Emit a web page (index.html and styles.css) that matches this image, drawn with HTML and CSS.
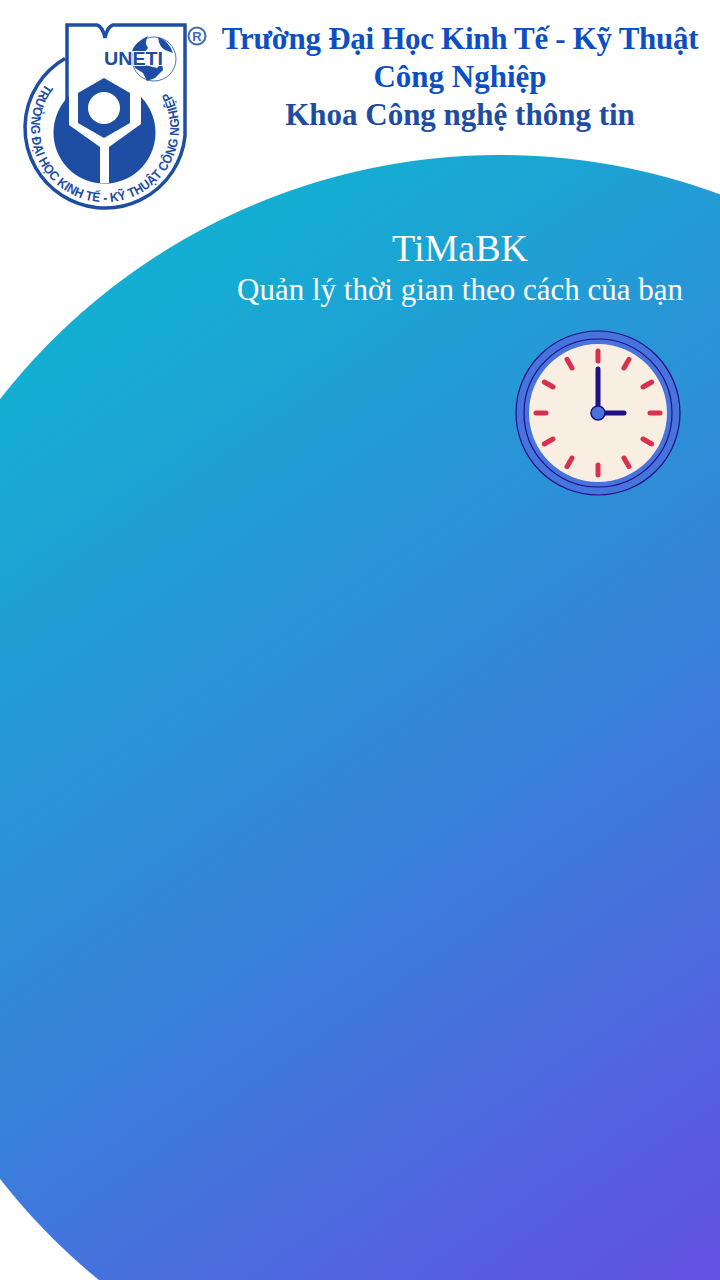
FILE: index.html
```html
<!DOCTYPE html>
<html lang="vi">
<head>
    <meta charset="UTF-8">
    <meta name="viewport" content="width=device-width, initial-scale=1.0">
    <title>TiMaBK</title>
    <link rel="stylesheet" href="styles.css">
</head>
<body>
    <div class="screen">
        <header class="school">
            <svg class="logo" viewBox="0 0 216 216" width="216" height="216" aria-label="UNETI">
                <!-- ring and book shaped shield -->
                <path class="logo-line" d="M65 58.500 A80.200 80.200 0 1 0 185 136 V25 H113 Q107 27 105 38 Q103 27 97 25 H67 V100"/>
                <path class="logo-fill" d="M69 96 A51 51 0 1 0 141 97 V124 L109 147 V183 H100 V147 L69 125 Z"/>
                <polygon class="logo-fill" points="104,78 130,93 130,123 104,138 78,123 78,93"/>
                <circle class="logo-hole" cx="104" cy="108" r="16"/>
                <!-- globe -->
                <circle class="logo-globe" cx="154" cy="59" r="22"/>
                <path class="logo-fill" d="M132 51 Q135 42 148 36 Q144 43 148 48 L145 52 Z"/>
                <path class="logo-fill" d="M158 37 Q169 41 173 53 L165 50 Q159 47 158 37 Z"/>
                <path class="logo-fill" d="M133 63 L145 65 L157 68 L162 63 L163 70 L155 78 L147 81 L143 73 L135 68 Z"/>
                <text class="logo-name" x="104" y="65" textLength="59" lengthAdjust="spacingAndGlyphs">UNETI</text>
                <!-- school name along the ring -->
                <path id="ring" class="logo-guide" d="M46 83.500 A74 74 0 1 0 169 91"/>
                <text class="logo-ring">
                    <textPath href="#ring" textLength="318" lengthAdjust="spacingAndGlyphs">TRƯỜNG ĐẠI HỌC KINH TẾ - KỸ THUẬT CÔNG NGHIỆP</textPath>
                </text>
                <circle class="logo-mark" cx="197" cy="36" r="8.500"/>
                <text class="logo-mark-r" x="197" y="40.500">R</text>
            </svg>
            <div class="school-name">
                <h1><span class="school-line">Trường Đại Học Kinh Tế - Kỹ Thuật</span><br>Công Nghiệp</h1>
                <h2>Khoa Công nghệ thông tin</h2>
            </div>
        </header>

        <section class="app-intro">
            <h3>TiMaBK</h3>
            <p>Quản lý thời gian theo cách của bạn</p>
        </section>

        <div class="clock-row">
            <svg class="clock" viewBox="0 0 168 168" width="168" height="168">
                <circle class="clock-rim" cx="84" cy="84" r="82"/>
                <circle class="clock-inner" cx="84" cy="84" r="74"/>
                <circle class="clock-face" cx="84" cy="84" r="69"/>
                <g class="clock-ticks">
                    <path d="M84 22 V32"/>
                    <path d="M84 22 V32" transform="rotate(30 84 84)"/>
                    <path d="M84 22 V32" transform="rotate(60 84 84)"/>
                    <path d="M84 22 V32" transform="rotate(90 84 84)"/>
                    <path d="M84 22 V32" transform="rotate(120 84 84)"/>
                    <path d="M84 22 V32" transform="rotate(150 84 84)"/>
                    <path d="M84 22 V32" transform="rotate(180 84 84)"/>
                    <path d="M84 22 V32" transform="rotate(210 84 84)"/>
                    <path d="M84 22 V32" transform="rotate(240 84 84)"/>
                    <path d="M84 22 V32" transform="rotate(270 84 84)"/>
                    <path d="M84 22 V32" transform="rotate(300 84 84)"/>
                    <path d="M84 22 V32" transform="rotate(330 84 84)"/>
                </g>
                <path class="clock-hands" d="M84 40 V84 H110"/>
                <circle class="clock-pin" cx="84" cy="84" r="7"/>
            </svg>
        </div>
    </div>
</body>
</html>
```

FILE: styles.css
```css
body {
    margin: 0;
    font-family: "Liberation Serif", serif;
}
.screen {
    box-sizing: border-box;
    width: 720px;
    height: 1280px;
    overflow: hidden;
    background:
        radial-gradient(circle 634px at 500px 789px, transparent 633.5px, #fff 634.5px),
        linear-gradient(145deg, #14aed2 22%, #3a7fda 65%, #6350e3 100%);
}
.school {
    display: flex;
    height: 216px;
    padding-right: 16px;
}
.logo {
    flex: none;
}
.logo-line {
    fill: none;
    stroke: #1e4ea3;
    stroke-width: 3.5;
}
.logo-fill {
    fill: #1e4ea3;
}
.logo-hole {
    fill: #fff;
}
.logo-globe {
    fill: none;
    stroke: #1e4ea3;
    stroke-width: 0.8;
}
.logo-guide {
    fill: none;
}
.logo-name {
    font-family: "Liberation Sans", sans-serif;
    font-weight: bold;
    font-size: 19px;
    fill: #1e4ea3;
    stroke: #fff;
    stroke-width: 2px;
    paint-order: stroke;
}
.logo-ring {
    font-family: "Liberation Sans", sans-serif;
    font-size: 13px;
    font-weight: bold;
    fill: #1e4ea3;
}
.logo-mark {
    fill: none;
    stroke: #3f6cb4;
    stroke-width: 2;
}
.logo-mark-r {
    font-family: "Liberation Sans", sans-serif;
    font-size: 13px;
    font-weight: bold;
    text-anchor: middle;
    fill: #3f6cb4;
}
.school-name {
    flex: 1;
    padding-top: 20px;
    text-align: center;
}
.school-name h1,
.school-name h2 {
    margin: 0;
    font-size: 31px;
    font-weight: bold;
    line-height: 38px;
}
.school-name h1 {
    color: #0c4fc4;
}
.school-name h2 {
    color: #1c4da2;
}
.school-line {
    letter-spacing: -0.3px;
}
.app-intro {
    padding-right: 16px;
    padding-left: 216px;
    color: #fff;
    text-align: center;
}
.app-intro h3 {
    margin: 9px 0 0;
    font-size: 38px;
    font-weight: normal;
    line-height: 46px;
}
.app-intro p {
    margin: 0;
    font-size: 31px;
    line-height: 38px;
}
.clock-row {
    display: flex;
    justify-content: flex-end;
    padding-top: 20px;
    padding-right: 38px;
}
.clock {
    display: block;
}
.clock-rim {
    fill: #4673dc;
    stroke: #1f0f85;
    stroke-width: 1.200;
}
.clock-inner {
    fill: none;
    stroke: #1f0f85;
    stroke-width: 1.200;
}
.clock-face {
    fill: #f9eee2;
}
.clock-ticks path {
    fill: none;
    stroke: #d9304f;
    stroke-width: 5;
    stroke-linecap: round;
}
.clock-hands {
    fill: none;
    stroke: #1f0f85;
    stroke-width: 5;
    stroke-linecap: round;
    stroke-linejoin: round;
}
.clock-pin {
    fill: #4673dc;
    stroke: #1f0f85;
    stroke-width: 1.500;
}
```
